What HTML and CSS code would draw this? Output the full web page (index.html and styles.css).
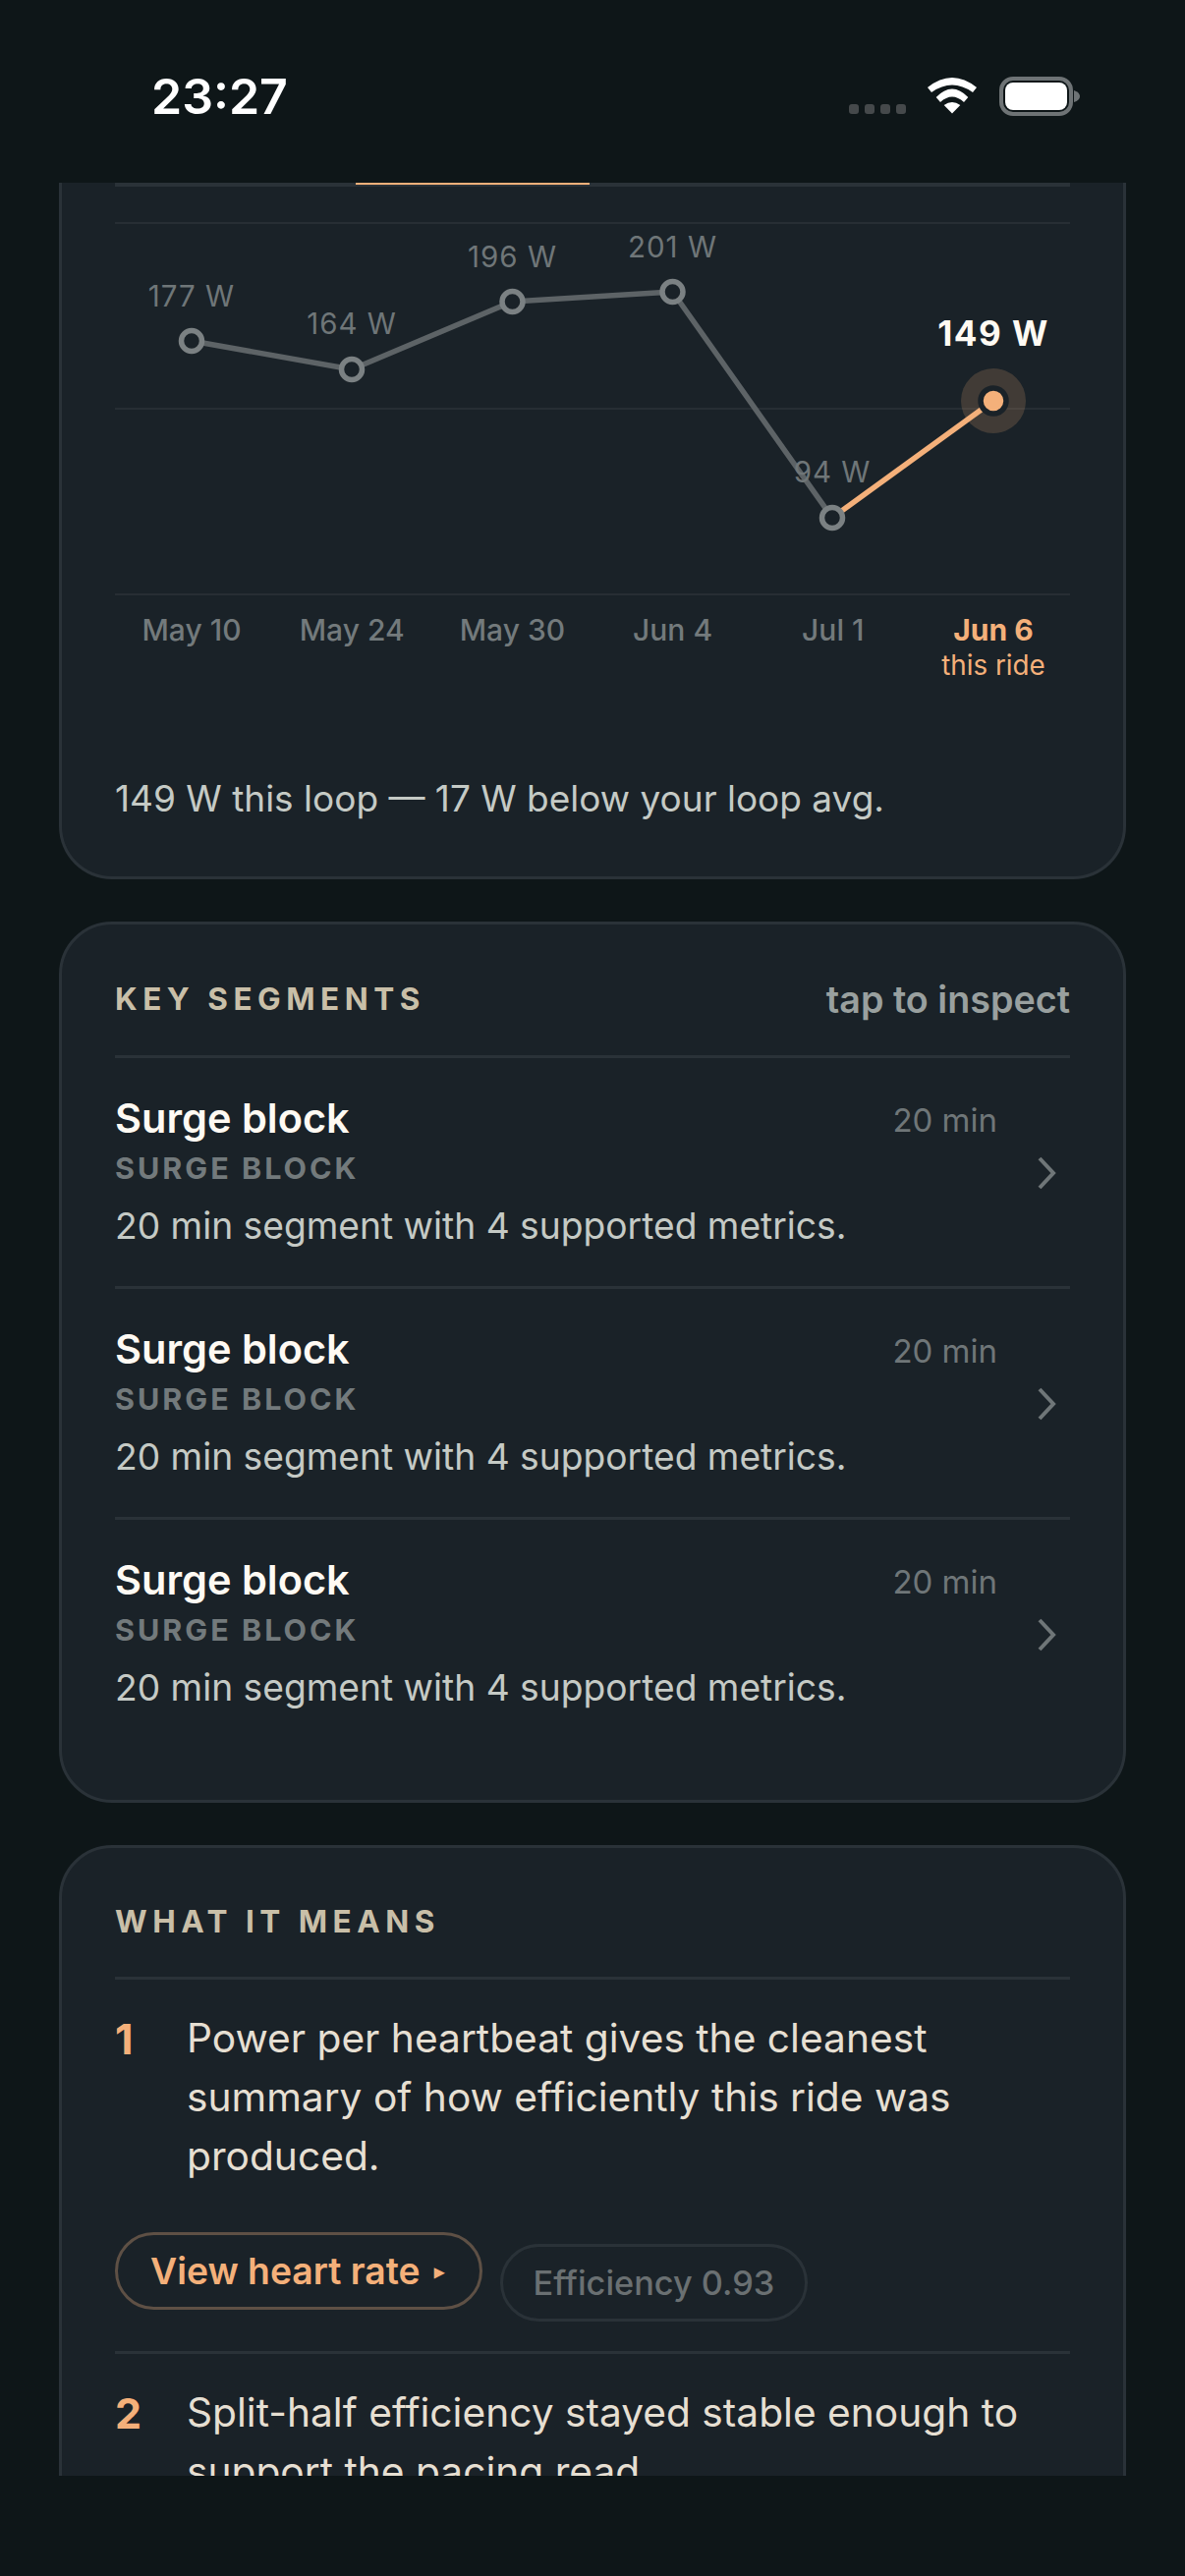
FILE: index.html
```html
<!DOCTYPE html>
<html lang="en">
<head>
    <meta charset="UTF-8">
    <meta name="viewport" content="width=device-width, initial-scale=1.0">
    <title>Ride detail</title>
    <link rel="stylesheet" href="styles.css">
</head>
<body>

    <!-- Status bar -->
    <div class="status-bar">
        <span class="status-time">23:27</span>
        <svg class="status-icons" width="236" height="40" viewBox="0 0 236 40">
            <rect x="0" y="28" width="10" height="10" rx="3" fill="#45494b"/>
            <rect x="16" y="28" width="10" height="10" rx="3" fill="#45494b"/>
            <rect x="32" y="28" width="10" height="10" rx="3" fill="#45494b"/>
            <rect x="48" y="28" width="10" height="10" rx="3" fill="#45494b"/>
            <g transform="translate(80 1)" fill="#fff">
                <path d="M0 10 Q25 -10 50 10 L46 15 Q25 0 4 15 Z"/>
                <path d="M8.7 20 Q25 3 41.3 20 L37 25 Q25 14 13 25 Z"/>
                <path d="M25 36.5 L16.7 28 Q25 22 33.3 28 Z"/>
            </g>
            <rect x="155" y="2" width="71" height="36" rx="12" fill="none" stroke="#6e7375" stroke-width="4"/>
            <rect x="159" y="6" width="63" height="28" rx="8" fill="#fff"/>
            <path d="M229 14 Q235 16 235 20 Q235 24 229 26 Z" fill="#6e7375"/>
        </svg>
    </div>

    <div class="scroller">

        <!-- Power chart (scrolled under the status bar) -->
        <section class="card card-cut">
            <div class="tab-track"><div class="tab-active"></div></div>

            <svg class="chart" width="972" height="416" viewBox="0 0 972 416">
                <line class="grid" x1="0" y1="37" x2="972" y2="37"/>
                <line class="grid" x1="0" y1="226" x2="972" y2="226"/>
                <line class="grid" x1="0" y1="415" x2="972" y2="415"/>

                <polyline class="trend" points="78,157 241,186 404.5,117 567.5,107 730,337"/>
                <line class="trend-now" x1="730" y1="337" x2="894" y2="218"/>

                <circle class="dot" cx="78" cy="157" r="10.5"/>
                <circle class="dot" cx="241" cy="186" r="10.5"/>
                <circle class="dot" cx="404.5" cy="117" r="10.5"/>
                <circle class="dot" cx="567.5" cy="107" r="10.5"/>
                <circle class="dot" cx="730" cy="337" r="10.5"/>
                <circle class="halo" cx="894" cy="218" r="33"/>
                <circle class="dot-now" cx="894" cy="218" r="13"/>

                <text class="val" x="78" y="122">177 W</text>
                <text class="val" x="241" y="150">164 W</text>
                <text class="val" x="404.5" y="82">196 W</text>
                <text class="val" x="567.5" y="72">201 W</text>
                <text class="val" x="730" y="301">94 W</text>
                <text class="val-now" x="894" y="162">149 W</text>
            </svg>

            <div class="x-labels">
                <div>May 10</div>
                <div>May 24</div>
                <div>May 30</div>
                <div>Jun 4</div>
                <div>Jul 1</div>
                <div class="x-now">Jun 6<span>this ride</span></div>
            </div>

            <p class="chart-note">149 W this loop — 17 W below your loop avg.</p>
        </section>

        <!-- Key segments -->
        <section class="card">
            <div class="card-head">
                <h3>KEY SEGMENTS</h3>
                <span class="head-hint">tap to inspect</span>
            </div>

            <div class="segment">
                <div class="segment-body">
                    <div class="segment-title">Surge block</div>
                    <div class="segment-tag">SURGE BLOCK</div>
                    <div class="segment-desc">20 min segment with 4 supported metrics.</div>
                </div>
                <span class="segment-time">20 min</span>
                <svg class="chevron" width="20" height="34" viewBox="0 0 20 34"><path d="M3 2 L17 17 L3 32"/></svg>
            </div>
            <div class="segment">
                <div class="segment-body">
                    <div class="segment-title">Surge block</div>
                    <div class="segment-tag">SURGE BLOCK</div>
                    <div class="segment-desc">20 min segment with 4 supported metrics.</div>
                </div>
                <span class="segment-time">20 min</span>
                <svg class="chevron" width="20" height="34" viewBox="0 0 20 34"><path d="M3 2 L17 17 L3 32"/></svg>
            </div>
            <div class="segment">
                <div class="segment-body">
                    <div class="segment-title">Surge block</div>
                    <div class="segment-tag">SURGE BLOCK</div>
                    <div class="segment-desc">20 min segment with 4 supported metrics.</div>
                </div>
                <span class="segment-time">20 min</span>
                <svg class="chevron" width="20" height="34" viewBox="0 0 20 34"><path d="M3 2 L17 17 L3 32"/></svg>
            </div>
        </section>

        <!-- What it means -->
        <section class="card card-long">
            <div class="card-head card-head-short">
                <h3>WHAT IT MEANS</h3>
            </div>

            <div class="point">
                <div class="point-row">
                    <span class="point-num">1</span>
                    <p>Power per heartbeat gives the cleanest summary of how efficiently this ride was produced.</p>
                </div>
                <div class="point-actions">
                    <span class="btn-link">View heart rate <i>▸</i></span>
                    <span class="chip">Efficiency 0.93</span>
                </div>
            </div>
            <div class="point">
                <div class="point-row">
                    <span class="point-num">2</span>
                    <p>Split-half efficiency stayed stable enough to support the pacing read.</p>
                </div>
            </div>
        </section>

    </div>

</body>
</html>
```

FILE: styles.css
```css
* { box-sizing: border-box; }
html, body { margin: 0; padding: 0; }
body { width: 1206px; height: 2622px; overflow: hidden; background: #0e1618; font-family: Inter, "Liberation Sans", sans-serif; }

.status-bar { height: 186px; display: flex; justify-content: space-between; padding: 78px 106px 0 154px; }
.status-time { font-size: 50px; line-height: 40px; font-weight: 600; color: #fff; }
.status-icons { display: block; }

.scroller { height: 2334px; overflow: hidden; padding: 0 60px; }

.card { background: #1a2228; border: 3px solid #2a3238; border-radius: 54px; padding: 0 54px; margin-bottom: 43px; }
.card-cut { border-top: 0; border-radius: 0 0 54px 54px; height: 709px; }
.card-long { padding-bottom: 200px; }

.tab-track { height: 4px; background: #2a3238; }
.tab-active { width: 238px; height: 2px; margin-left: 245px; background: #f4b07a; }

.chart { display: block; }
.grid { stroke: #272e34; stroke-width: 2; }
.trend { fill: none; stroke: #5d6366; stroke-width: 5.5; stroke-linejoin: round; }
.trend-now { stroke: #f4b07a; stroke-width: 5.5; }
.dot { fill: #1a2228; stroke: #7b8183; stroke-width: 5.5; }
.halo { fill: #f4b07a; fill-opacity: 0.18; }
.dot-now { fill: #f4b07a; stroke: #1a2228; stroke-width: 5.5; }
.val { font-size: 29.5px; fill: #6f7678; text-anchor: middle; letter-spacing: 1px; }
.val-now { font-size: 35px; font-weight: 700; fill: #fffaf3; text-anchor: middle; letter-spacing: 1.5px; }

.x-labels { display: grid; grid-template-columns: repeat(6, 163.2px); margin: 17px -3.6px 0; font-size: 30px; line-height: 36px; font-weight: 500; color: #737a7c; text-align: center; }
.x-now { color: #f4b07a; font-weight: 700; }
.x-now span { display: block; font-size: 27.8px; font-weight: 400; }

.chart-note { margin: 93px 0 0; font-size: 37px; line-height: 50px; color: #c5cac5; }

.card-head { display: flex; justify-content: space-between; align-items: center; height: 136px; padding-top: 18px; border-bottom: 3px solid #2a3238; }
.card-head-short { height: 134px; padding-top: 18px; }
.card-head h3 { margin: 0; font-size: 31.5px; font-weight: 700; letter-spacing: 5.5px; color: #c9bfa8; }
.head-hint { font-size: 37.7px; font-weight: 600; color: #99a09f; }

.segment { display: flex; height: 235px; padding-top: 35px; border-bottom: 3px solid #2a3238; }
.segment:last-child { border-bottom: 0; height: 285px; }
.segment-body { flex: 1; }
.segment-title { font-size: 41.5px; line-height: 52px; font-weight: 600; color: #fffaf3; }
.segment-tag { margin-top: 7px; font-size: 30.5px; line-height: 36px; font-weight: 700; letter-spacing: 3px; color: #737a7c; }
.segment-desc { margin-top: 16px; font-size: 37.2px; line-height: 50px; color: #c5cac5; }
.segment-time { margin-top: 6px; font-size: 33px; line-height: 44px; color: #6f7678; }
.chevron { flex: none; margin: 65px 14px 0 40px; }
.chevron path { fill: none; stroke: #6f7678; stroke-width: 4; }

.point { padding: 30px 0 30px; border-bottom: 3px solid #2a3238; }
.point-row { display: flex; }
.point-num { flex: none; width: 73px; font-size: 43px; line-height: 60px; font-weight: 700; color: #f4b07a; }
.point p { margin: 0; font-size: 40.7px; line-height: 60px; color: #e6dfd2; }

.point-actions { display: flex; align-items: flex-start; gap: 18px; margin-top: 47px; }
.btn-link { height: 79px; display: flex; align-items: center; gap: 14px; padding: 0 36px 0 33px; border: 3px solid #5e5045; border-radius: 40px; font-size: 37.3px; font-weight: 600; color: #f4b07a; }
.btn-link i { font-style: normal; font-size: 20px; }
.chip { height: 79px; display: flex; align-items: center; margin-top: 12px; padding: 0 31px; border: 3px solid #2a3238; border-radius: 40px; font-size: 34.3px; font-weight: 500; color: #6a7072; }
```
